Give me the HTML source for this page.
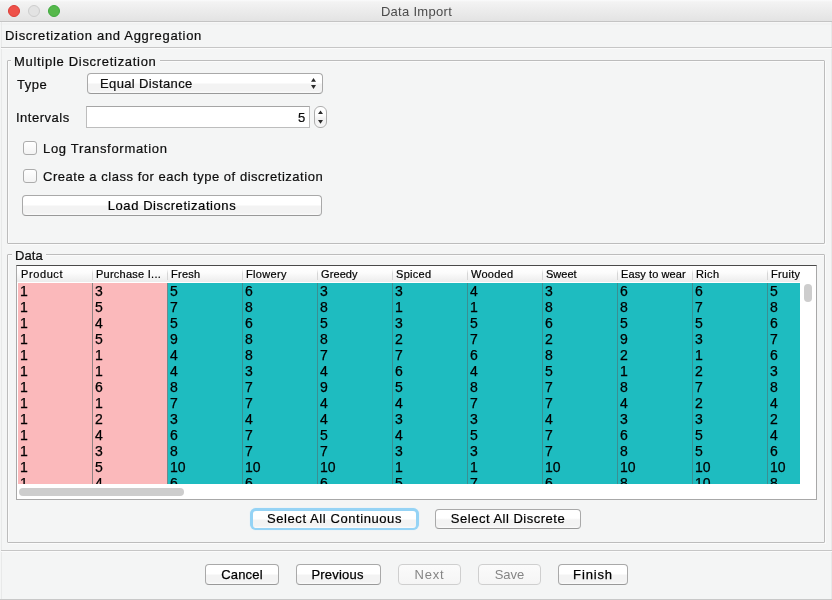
<!DOCTYPE html>
<html><head><meta charset="utf-8">
<style>
*{box-sizing:border-box;margin:0;padding:0}
html,body{width:832px;height:600px;overflow:hidden;background:#f4f5f5;font-family:"Liberation Sans",sans-serif;font-size:13px;color:#111;position:relative}
.abs{position:absolute}
#titlebar{left:0;top:0;width:832px;height:22px;background:linear-gradient(#fafbfc 0,#f3f3f3 2px,#e3e3e3 21px);border-bottom:1px solid #c4c4c4}
.light{top:5px;width:12px;height:12px;border-radius:50%}
#title{left:0;width:832px;top:5px;text-align:center;color:#4b4b4b;letter-spacing:0.3px;padding-left:1px}
.txt{white-space:nowrap;line-height:13px;height:13px}
.bgc{background:#f4f5f5}
.sep{height:2px;border-top:1px solid #c6c6c6;background:#fbfbfb}
.etched{border:1px solid #bcbcbc;border-radius:1px;box-shadow:inset 1px 1px 0 #fbfbfb, 1px 1px 0 #fbfbfb}
.btn{background:linear-gradient(#ffffff 0,#ffffff 45%,#f3f3f3 55%,#f3f3f3 88%,#fbfbfb 100%);border:1px solid #a9a9a9;border-bottom-color:#999;border-radius:4px}
.btn span{position:absolute;left:0;right:0;text-align:center;white-space:nowrap;line-height:13px;color:#000;-webkit-text-stroke:0.2px #000}
.tf{background:#fff;border:1px solid #bdbdbd;border-top-color:#a5a5a5}
.spin{background:linear-gradient(#ffffff,#fdfdfd 40%,#f1f1f1 60%,#f6f6f6);border:1px solid #adadad;border-radius:6px}
.cb{width:14px;height:14px;border:1px solid #acacac;border-radius:3px;background:linear-gradient(#ffffff,#f3f3f3)}
.hdr{background:linear-gradient(#ffffff,#fcfcfc 40%,#ececec 94%,#ffffff 94%)}
.hdiv{background:linear-gradient(#fff,#d6d6d6 40%,#d6d6d6)}
.hd{font-size:11px;line-height:11px;height:12px;color:#000;-webkit-text-stroke:0.2px #000}
.cell{font-size:14px;line-height:13px;color:#000;-webkit-text-stroke:0.25px #000}
.thumb{background:#cdcdcd;border-radius:4px}
.lbl{-webkit-text-stroke:0.2px #000}

#root{position:absolute;left:0;top:0;width:832px;height:600px;will-change:transform;-webkit-font-smoothing:antialiased}

</style></head><body><div id="root">
<div id="titlebar" class="abs"></div>
<div class="abs light" style="left:8px;background:#ee5149;border:1px solid #dc3d36"></div>
<div class="abs light" style="left:28px;background:#e3e3e3;border:1px solid #cdcdcd"></div>
<div class="abs light" style="left:48px;background:#56b84b;border:1px solid #3faa3e"></div>
<div id="title" class="abs txt">Data Import</div>
<div class="abs" style="left:0;top:22px;width:832px;height:1px;background:#f7f7f7"></div>
<div class="abs" style="left:0;top:23px;width:832px;height:2px;background:#f1f2f2"></div>
<div class="abs" style="left:1px;top:22px;width:1px;height:577px;background:#e8e9e9"></div>
<div class="abs" style="left:831px;top:22px;width:1px;height:577px;background:#e8e9e9"></div>
<div class="abs" style="left:0;top:599px;width:832px;height:1px;background:#c8c8c8"></div>
<div class="abs txt lbl" style="left:5px;top:29px;letter-spacing:0.69px">Discretization and Aggregation</div>
<div class="abs sep" style="left:1px;top:47px;width:831px"></div>
<div class="abs etched" style="left:7px;top:60px;width:818px;height:184px"></div>
<div class="abs txt lbl bgc" style="left:11px;top:55px;padding:0 3px;letter-spacing:0.7px">Multiple Discretization</div>
<div class="abs txt lbl" style="left:17px;top:78px;letter-spacing:0.5px">Type</div>
<div class="abs btn" style="left:87px;top:73px;width:236px;height:21px"></div>
<div class="abs txt lbl" style="left:100px;top:77px;letter-spacing:0.37px">Equal Distance</div>
<svg class="abs" style="left:309px;top:77px" width="10" height="14"><path d="M2 4.8 L4.5 1.1 L7 4.8Z M2 7.9 L4.5 12.1 L7 7.9Z" fill="#2a2a2a"/></svg>
<div class="abs txt lbl" style="left:16px;top:111px;letter-spacing:0.5px">Intervals</div>
<div class="abs tf" style="left:86px;top:106px;width:224px;height:22px"></div>
<div class="abs txt lbl" style="left:298px;top:111px;letter-spacing:-0.5px">5</div>
<div class="abs spin" style="left:314px;top:106px;width:13px;height:22px"></div>
<svg class="abs" style="left:314px;top:106px" width="13" height="22"><path d="M4 8 L6.5 4.4 L9 8Z M4 14 L6.5 17.8 L9 14Z" fill="#2a2a2a"/></svg>
<div class="abs cb" style="left:23px;top:141px"></div>
<div class="abs txt lbl" style="left:43px;top:142px;letter-spacing:0.7px">Log Transformation</div>
<div class="abs cb" style="left:23px;top:169px"></div>
<div class="abs txt lbl" style="left:43px;top:170px;letter-spacing:0.53px">Create a class for each type of discretization</div>
<div class="abs btn" style="left:22px;top:195px;width:300px;height:21px"><span style="top:3px;letter-spacing:0.57px">Load Discretizations</span></div>
<div class="abs etched" style="left:7px;top:254px;width:818px;height:289px"></div>
<div class="abs txt lbl bgc" style="left:12px;top:249px;padding:0 3px;letter-spacing:0.1px">Data</div>
<div class="abs" style="left:16px;top:265px;width:801px;height:235px;background:#fff;border:1px solid #a8a8a8;border-top-color:#4a4a4a"></div>
<div class="abs hdr" style="left:17px;top:266px;width:783px;height:17px"></div>
<div class="abs txt hd" style="left:21px;top:269px;width:71px;overflow:hidden;letter-spacing:0.6px">Product</div>
<div class="abs hdiv" style="left:92px;top:269px;width:1px;height:11px"></div>
<div class="abs txt hd" style="left:96px;top:269px;width:71px;overflow:hidden;letter-spacing:0.25px">Purchase I...</div>
<div class="abs hdiv" style="left:167px;top:269px;width:1px;height:11px"></div>
<div class="abs txt hd" style="left:171px;top:269px;width:71px;overflow:hidden;letter-spacing:0.25px">Fresh</div>
<div class="abs hdiv" style="left:242px;top:269px;width:1px;height:11px"></div>
<div class="abs txt hd" style="left:246px;top:269px;width:71px;overflow:hidden;letter-spacing:0.35px">Flowery</div>
<div class="abs hdiv" style="left:317px;top:269px;width:1px;height:11px"></div>
<div class="abs txt hd" style="left:321px;top:269px;width:71px;overflow:hidden;letter-spacing:0.1px">Greedy</div>
<div class="abs hdiv" style="left:392px;top:269px;width:1px;height:11px"></div>
<div class="abs txt hd" style="left:396px;top:269px;width:71px;overflow:hidden;letter-spacing:0.3px">Spiced</div>
<div class="abs hdiv" style="left:467px;top:269px;width:1px;height:11px"></div>
<div class="abs txt hd" style="left:471px;top:269px;width:71px;overflow:hidden;letter-spacing:0.25px">Wooded</div>
<div class="abs hdiv" style="left:542px;top:269px;width:1px;height:11px"></div>
<div class="abs txt hd" style="left:546px;top:269px;width:71px;overflow:hidden;letter-spacing:0.0px">Sweet</div>
<div class="abs hdiv" style="left:617px;top:269px;width:1px;height:11px"></div>
<div class="abs txt hd" style="left:621px;top:269px;width:71px;overflow:hidden;letter-spacing:0.1px">Easy to wear</div>
<div class="abs hdiv" style="left:692px;top:269px;width:1px;height:11px"></div>
<div class="abs txt hd" style="left:696px;top:269px;width:71px;overflow:hidden;letter-spacing:0.35px">Rich</div>
<div class="abs hdiv" style="left:767px;top:269px;width:1px;height:11px"></div>
<div class="abs txt hd" style="left:771px;top:269px;width:29px;overflow:hidden;letter-spacing:0.3px">Fruity</div>
<div class="abs" style="left:18px;top:283px;width:782px;height:201px;overflow:hidden">
<div class="abs" style="left:0px;top:0;width:75px;height:201px;background:#fbb9bb"></div>
<div class="abs txt cell" style="left:2px;top:2px">1</div>
<div class="abs txt cell" style="left:2px;top:18px">1</div>
<div class="abs txt cell" style="left:2px;top:34px">1</div>
<div class="abs txt cell" style="left:2px;top:50px">1</div>
<div class="abs txt cell" style="left:2px;top:66px">1</div>
<div class="abs txt cell" style="left:2px;top:82px">1</div>
<div class="abs txt cell" style="left:2px;top:98px">1</div>
<div class="abs txt cell" style="left:2px;top:114px">1</div>
<div class="abs txt cell" style="left:2px;top:130px">1</div>
<div class="abs txt cell" style="left:2px;top:146px">1</div>
<div class="abs txt cell" style="left:2px;top:162px">1</div>
<div class="abs txt cell" style="left:2px;top:178px">1</div>
<div class="abs txt cell" style="left:2px;top:194px">1</div>
<div class="abs" style="left:75px;top:0;width:75px;height:201px;background:#fbb9bb"></div>
<div class="abs" style="left:74px;top:0;width:1px;height:201px;background:#8f8282"></div>
<div class="abs txt cell" style="left:77px;top:2px">3</div>
<div class="abs txt cell" style="left:77px;top:18px">5</div>
<div class="abs txt cell" style="left:77px;top:34px">4</div>
<div class="abs txt cell" style="left:77px;top:50px">5</div>
<div class="abs txt cell" style="left:77px;top:66px">1</div>
<div class="abs txt cell" style="left:77px;top:82px">1</div>
<div class="abs txt cell" style="left:77px;top:98px">6</div>
<div class="abs txt cell" style="left:77px;top:114px">1</div>
<div class="abs txt cell" style="left:77px;top:130px">2</div>
<div class="abs txt cell" style="left:77px;top:146px">4</div>
<div class="abs txt cell" style="left:77px;top:162px">3</div>
<div class="abs txt cell" style="left:77px;top:178px">5</div>
<div class="abs txt cell" style="left:77px;top:194px">4</div>
<div class="abs" style="left:150px;top:0;width:75px;height:201px;background:#1ebcc0"></div>
<div class="abs" style="left:149px;top:0;width:1px;height:201px;background:#6f8a8b"></div>
<div class="abs txt cell" style="left:152px;top:2px">5</div>
<div class="abs txt cell" style="left:152px;top:18px">7</div>
<div class="abs txt cell" style="left:152px;top:34px">5</div>
<div class="abs txt cell" style="left:152px;top:50px">9</div>
<div class="abs txt cell" style="left:152px;top:66px">4</div>
<div class="abs txt cell" style="left:152px;top:82px">4</div>
<div class="abs txt cell" style="left:152px;top:98px">8</div>
<div class="abs txt cell" style="left:152px;top:114px">7</div>
<div class="abs txt cell" style="left:152px;top:130px">3</div>
<div class="abs txt cell" style="left:152px;top:146px">6</div>
<div class="abs txt cell" style="left:152px;top:162px">8</div>
<div class="abs txt cell" style="left:152px;top:178px">10</div>
<div class="abs txt cell" style="left:152px;top:194px">6</div>
<div class="abs" style="left:225px;top:0;width:75px;height:201px;background:#1ebcc0"></div>
<div class="abs" style="left:224px;top:0;width:1px;height:201px;background:#3b8f92"></div>
<div class="abs txt cell" style="left:227px;top:2px">6</div>
<div class="abs txt cell" style="left:227px;top:18px">8</div>
<div class="abs txt cell" style="left:227px;top:34px">6</div>
<div class="abs txt cell" style="left:227px;top:50px">8</div>
<div class="abs txt cell" style="left:227px;top:66px">8</div>
<div class="abs txt cell" style="left:227px;top:82px">3</div>
<div class="abs txt cell" style="left:227px;top:98px">7</div>
<div class="abs txt cell" style="left:227px;top:114px">7</div>
<div class="abs txt cell" style="left:227px;top:130px">4</div>
<div class="abs txt cell" style="left:227px;top:146px">7</div>
<div class="abs txt cell" style="left:227px;top:162px">7</div>
<div class="abs txt cell" style="left:227px;top:178px">10</div>
<div class="abs txt cell" style="left:227px;top:194px">6</div>
<div class="abs" style="left:300px;top:0;width:75px;height:201px;background:#1ebcc0"></div>
<div class="abs" style="left:299px;top:0;width:1px;height:201px;background:#3b8f92"></div>
<div class="abs txt cell" style="left:302px;top:2px">3</div>
<div class="abs txt cell" style="left:302px;top:18px">8</div>
<div class="abs txt cell" style="left:302px;top:34px">5</div>
<div class="abs txt cell" style="left:302px;top:50px">8</div>
<div class="abs txt cell" style="left:302px;top:66px">7</div>
<div class="abs txt cell" style="left:302px;top:82px">4</div>
<div class="abs txt cell" style="left:302px;top:98px">9</div>
<div class="abs txt cell" style="left:302px;top:114px">4</div>
<div class="abs txt cell" style="left:302px;top:130px">4</div>
<div class="abs txt cell" style="left:302px;top:146px">5</div>
<div class="abs txt cell" style="left:302px;top:162px">7</div>
<div class="abs txt cell" style="left:302px;top:178px">10</div>
<div class="abs txt cell" style="left:302px;top:194px">6</div>
<div class="abs" style="left:375px;top:0;width:75px;height:201px;background:#1ebcc0"></div>
<div class="abs" style="left:374px;top:0;width:1px;height:201px;background:#3b8f92"></div>
<div class="abs txt cell" style="left:377px;top:2px">3</div>
<div class="abs txt cell" style="left:377px;top:18px">1</div>
<div class="abs txt cell" style="left:377px;top:34px">3</div>
<div class="abs txt cell" style="left:377px;top:50px">2</div>
<div class="abs txt cell" style="left:377px;top:66px">7</div>
<div class="abs txt cell" style="left:377px;top:82px">6</div>
<div class="abs txt cell" style="left:377px;top:98px">5</div>
<div class="abs txt cell" style="left:377px;top:114px">4</div>
<div class="abs txt cell" style="left:377px;top:130px">3</div>
<div class="abs txt cell" style="left:377px;top:146px">4</div>
<div class="abs txt cell" style="left:377px;top:162px">3</div>
<div class="abs txt cell" style="left:377px;top:178px">1</div>
<div class="abs txt cell" style="left:377px;top:194px">5</div>
<div class="abs" style="left:450px;top:0;width:75px;height:201px;background:#1ebcc0"></div>
<div class="abs" style="left:449px;top:0;width:1px;height:201px;background:#3b8f92"></div>
<div class="abs txt cell" style="left:452px;top:2px">4</div>
<div class="abs txt cell" style="left:452px;top:18px">1</div>
<div class="abs txt cell" style="left:452px;top:34px">5</div>
<div class="abs txt cell" style="left:452px;top:50px">7</div>
<div class="abs txt cell" style="left:452px;top:66px">6</div>
<div class="abs txt cell" style="left:452px;top:82px">4</div>
<div class="abs txt cell" style="left:452px;top:98px">8</div>
<div class="abs txt cell" style="left:452px;top:114px">7</div>
<div class="abs txt cell" style="left:452px;top:130px">3</div>
<div class="abs txt cell" style="left:452px;top:146px">5</div>
<div class="abs txt cell" style="left:452px;top:162px">3</div>
<div class="abs txt cell" style="left:452px;top:178px">1</div>
<div class="abs txt cell" style="left:452px;top:194px">7</div>
<div class="abs" style="left:525px;top:0;width:75px;height:201px;background:#1ebcc0"></div>
<div class="abs" style="left:524px;top:0;width:1px;height:201px;background:#3b8f92"></div>
<div class="abs txt cell" style="left:527px;top:2px">3</div>
<div class="abs txt cell" style="left:527px;top:18px">8</div>
<div class="abs txt cell" style="left:527px;top:34px">6</div>
<div class="abs txt cell" style="left:527px;top:50px">2</div>
<div class="abs txt cell" style="left:527px;top:66px">8</div>
<div class="abs txt cell" style="left:527px;top:82px">5</div>
<div class="abs txt cell" style="left:527px;top:98px">7</div>
<div class="abs txt cell" style="left:527px;top:114px">7</div>
<div class="abs txt cell" style="left:527px;top:130px">4</div>
<div class="abs txt cell" style="left:527px;top:146px">7</div>
<div class="abs txt cell" style="left:527px;top:162px">7</div>
<div class="abs txt cell" style="left:527px;top:178px">10</div>
<div class="abs txt cell" style="left:527px;top:194px">6</div>
<div class="abs" style="left:600px;top:0;width:75px;height:201px;background:#1ebcc0"></div>
<div class="abs" style="left:599px;top:0;width:1px;height:201px;background:#3b8f92"></div>
<div class="abs txt cell" style="left:602px;top:2px">6</div>
<div class="abs txt cell" style="left:602px;top:18px">8</div>
<div class="abs txt cell" style="left:602px;top:34px">5</div>
<div class="abs txt cell" style="left:602px;top:50px">9</div>
<div class="abs txt cell" style="left:602px;top:66px">2</div>
<div class="abs txt cell" style="left:602px;top:82px">1</div>
<div class="abs txt cell" style="left:602px;top:98px">8</div>
<div class="abs txt cell" style="left:602px;top:114px">4</div>
<div class="abs txt cell" style="left:602px;top:130px">3</div>
<div class="abs txt cell" style="left:602px;top:146px">6</div>
<div class="abs txt cell" style="left:602px;top:162px">8</div>
<div class="abs txt cell" style="left:602px;top:178px">10</div>
<div class="abs txt cell" style="left:602px;top:194px">8</div>
<div class="abs" style="left:675px;top:0;width:75px;height:201px;background:#1ebcc0"></div>
<div class="abs" style="left:674px;top:0;width:1px;height:201px;background:#3b8f92"></div>
<div class="abs txt cell" style="left:677px;top:2px">6</div>
<div class="abs txt cell" style="left:677px;top:18px">7</div>
<div class="abs txt cell" style="left:677px;top:34px">5</div>
<div class="abs txt cell" style="left:677px;top:50px">3</div>
<div class="abs txt cell" style="left:677px;top:66px">1</div>
<div class="abs txt cell" style="left:677px;top:82px">2</div>
<div class="abs txt cell" style="left:677px;top:98px">7</div>
<div class="abs txt cell" style="left:677px;top:114px">2</div>
<div class="abs txt cell" style="left:677px;top:130px">3</div>
<div class="abs txt cell" style="left:677px;top:146px">5</div>
<div class="abs txt cell" style="left:677px;top:162px">5</div>
<div class="abs txt cell" style="left:677px;top:178px">10</div>
<div class="abs txt cell" style="left:677px;top:194px">10</div>
<div class="abs" style="left:750px;top:0;width:75px;height:201px;background:#1ebcc0"></div>
<div class="abs" style="left:749px;top:0;width:1px;height:201px;background:#3b8f92"></div>
<div class="abs txt cell" style="left:752px;top:2px">5</div>
<div class="abs txt cell" style="left:752px;top:18px">8</div>
<div class="abs txt cell" style="left:752px;top:34px">6</div>
<div class="abs txt cell" style="left:752px;top:50px">7</div>
<div class="abs txt cell" style="left:752px;top:66px">6</div>
<div class="abs txt cell" style="left:752px;top:82px">3</div>
<div class="abs txt cell" style="left:752px;top:98px">8</div>
<div class="abs txt cell" style="left:752px;top:114px">4</div>
<div class="abs txt cell" style="left:752px;top:130px">2</div>
<div class="abs txt cell" style="left:752px;top:146px">4</div>
<div class="abs txt cell" style="left:752px;top:162px">6</div>
<div class="abs txt cell" style="left:752px;top:178px">10</div>
<div class="abs txt cell" style="left:752px;top:194px">8</div>
</div>
<div class="abs thumb" style="left:804px;top:284px;width:8px;height:18px"></div>
<div class="abs thumb" style="left:19px;top:488px;width:165px;height:8px"></div>
<div class="abs" style="left:250px;top:508px;width:169px;height:22px;border-radius:6px;background:#95d3f5;box-shadow:0 0 1px #b5e0f7"></div>
<div class="abs btn" style="left:253px;top:511px;width:163px;height:17px;border:none;border-radius:3px"><span style="top:1px;letter-spacing:0.58px">Select All Continuous</span></div>
<div class="abs btn" style="left:435px;top:509px;width:146px;height:20px"><span style="top:2px;letter-spacing:0.5px">Select All Discrete</span></div>
<div class="abs sep" style="left:1px;top:550px;width:831px"></div>
<div class="abs btn" style="left:205px;top:564px;width:74px;height:21px;"><span style="top:2.5px;-webkit-text-stroke:0.25px #000;letter-spacing:0.2px;">Cancel</span></div>
<div class="abs btn" style="left:296px;top:564px;width:85px;height:21px;"><span style="top:2.5px;-webkit-text-stroke:0.25px #000;letter-spacing:0.2px;right:2px;">Previous</span></div>
<div class="abs btn" style="left:398px;top:564px;width:63px;height:21px;border-color:#cfcfcf;background:linear-gradient(#fbfbfb,#f5f5f5)"><span style="top:2.5px;color:#858585;-webkit-text-stroke:0;letter-spacing:0.8px;">Next</span></div>
<div class="abs btn" style="left:478px;top:564px;width:63px;height:21px;border-color:#cfcfcf;background:linear-gradient(#fbfbfb,#f5f5f5)"><span style="top:2.5px;color:#858585;-webkit-text-stroke:0;letter-spacing:0.0px;">Save</span></div>
<div class="abs btn" style="left:558px;top:564px;width:70px;height:21px;"><span style="top:2.5px;-webkit-text-stroke:0.25px #000;letter-spacing:0.85px;">Finish</span></div>
</div></body></html>
